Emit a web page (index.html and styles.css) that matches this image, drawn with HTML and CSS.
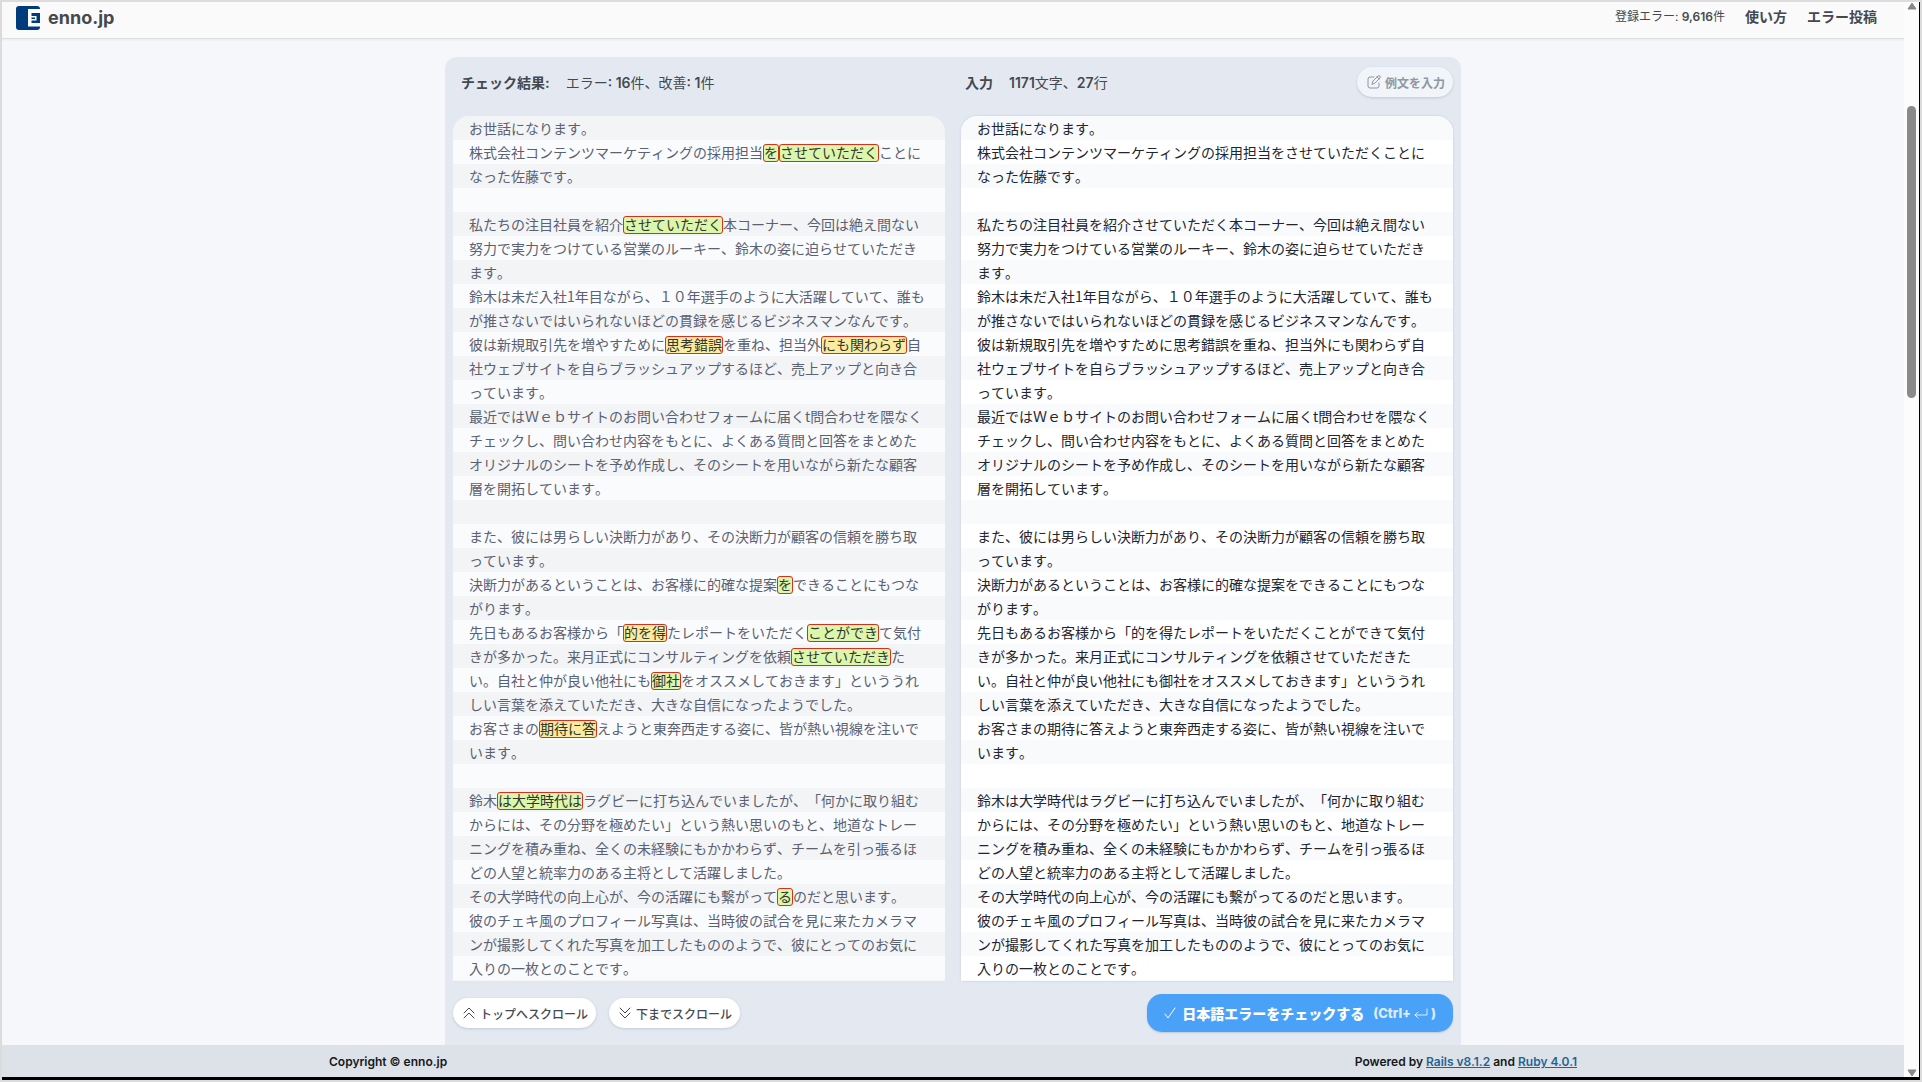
FILE: index.html
```html
<!DOCTYPE html>
<html lang="ja">
<head>
<meta charset="utf-8">
<meta name="viewport" content="width=device-width, initial-scale=1">
<title>enno.jp</title>
<link rel="stylesheet" href="styles.css">
</head>
<body>
<div class="window">
  <div class="page">
    <header class="site-header">
      <a class="brand" href="#">
        <svg width="24" height="24" viewBox="0 0 24 24" aria-hidden="true">
          <rect width="24" height="24" rx="3" fill="#003b7c"/>
          <path d="M12 3H24V7H15.500V10H20.500V14.500H15.500V17H24V20.500H12Z" fill="#fff"/>
          <path d="M15.500 11.500H19V13H15.500Z" fill="#003b7c"/>
        </svg>
        <span>enno.jp</span>
      </a>
      <nav class="site-nav">
        <span class="registered">登録エラー: <b>9,616</b>件</span>
        <a href="#">使い方</a>
        <a href="#">エラー投稿</a>
      </nav>
    </header>

    <main class="checker">
      <section class="panel">
        <div class="panel-head">
          <h2>チェック結果:</h2>
          <p>エラー<b>: 16</b>件、改善<b>: 1</b>件</p>
        </div>
        <div class="result">お世話になります。
株式会社コンテンツマーケティングの採用担当<mark>を</mark><mark>させていただく</mark>ことになった佐藤です。

私たちの注目社員を紹介<mark>させていただく</mark>本コーナー、今回は絶え間ない努力で実力をつけている営業のルーキー、鈴木の姿に迫らせていただきます。
鈴木は未だ入社1年目ながら、１０年選手のように大活躍していて、誰もが推さないではいられないほどの貫録を感じるビジネスマンなんです。
彼は新規取引先を増やすために<mark class="warn">思考錯誤</mark>を重ね、担当外<mark class="warn">にも関わらず</mark>自社ウェブサイトを自らブラッシュアップするほど、売上アップと向き合っています。
最近ではＷｅｂサイトのお問い合わせフォームに届くt問合わせを隈なくチェックし、問い合わせ内容をもとに、よくある質問と回答をまとめたオリジナルのシートを予め作成し、そのシートを用いながら新たな顧客層を開拓しています。

また、彼には男らしい決断力があり、その決断力が顧客の信頼を勝ち取っています。
決断力があるということは、お客様に的確な提案<mark>を</mark>できることにもつながります。
先日もあるお客様から「<mark class="warn">的を得</mark>たレポートをいただく<mark>ことができ</mark>て気付きが多かった。来月正式にコンサルティングを依頼<mark>させていただき</mark>たい。自社と仲が良い他社にも<mark>御社</mark>をオススメしておきます」といううれしい言葉を添えていただき、大きな自信になったようでした。
お客さまの<mark class="warn">期待に答</mark>えようと東奔西走する姿に、皆が熱い視線を注いでいます。

鈴木<mark>は大学時代は</mark>ラグビーに打ち込んでいましたが、「何かに取り組むからには、その分野を極めたい」という熱い思いのもと、地道なトレーニングを積み重ね、全くの未経験にもかかわらず、チームを引っ張るほどの人望と統率力のある主将として活躍しました。
その大学時代の向上心が、今の活躍にも繋がって<mark>る</mark>のだと思います。
彼のチェキ風のプロフィール写真は、当時彼の試合を見に来たカメラマンが撮影してくれた写真を加工したもののようで、彼にとってのお気に入りの一枚とのことです。</div>
        <div class="actions">
          <button class="pill" type="button">
            <svg width="12" height="12" viewBox="0 0 12 12" aria-hidden="true"><path d="M1 6 6 1l5 5M1 11l5-5 5 5"/></svg>
            トップへスクロール
          </button>
          <button class="pill" type="button">
            <svg width="12" height="12" viewBox="0 0 12 12" aria-hidden="true"><path d="m1 1 5 5 5-5M1 6l5 5 5-5"/></svg>
            下までスクロール
          </button>
        </div>
      </section>

      <section class="panel">
        <div class="panel-head">
          <h2><label for="source">入力</label></h2>
          <p><b>1171</b>文字、<b>27</b>行</p>
          <button class="pill sample" type="button">
            <svg width="14" height="14" viewBox="0 0 14 14" aria-hidden="true"><path d="M7 2H3a2 2 0 0 0-2 2v7a2 2 0 0 0 2 2h7a2 2 0 0 0 2-2V8M5 9l1-3 5-5q1-.6 2 0 .6 1 0 2L8 8Zm5-7 2 2"/></svg>
            例文を入力
          </button>
        </div>
        <textarea id="source" class="source" rows="36" spellcheck="false">お世話になります。
株式会社コンテンツマーケティングの採用担当をさせていただくことになった佐藤です。

私たちの注目社員を紹介させていただく本コーナー、今回は絶え間ない努力で実力をつけている営業のルーキー、鈴木の姿に迫らせていただきます。
鈴木は未だ入社1年目ながら、１０年選手のように大活躍していて、誰もが推さないではいられないほどの貫録を感じるビジネスマンなんです。
彼は新規取引先を増やすために思考錯誤を重ね、担当外にも関わらず自社ウェブサイトを自らブラッシュアップするほど、売上アップと向き合っています。
最近ではＷｅｂサイトのお問い合わせフォームに届くt問合わせを隈なくチェックし、問い合わせ内容をもとに、よくある質問と回答をまとめたオリジナルのシートを予め作成し、そのシートを用いながら新たな顧客層を開拓しています。

また、彼には男らしい決断力があり、その決断力が顧客の信頼を勝ち取っています。
決断力があるということは、お客様に的確な提案をできることにもつながります。
先日もあるお客様から「的を得たレポートをいただくことができて気付きが多かった。来月正式にコンサルティングを依頼させていただきたい。自社と仲が良い他社にも御社をオススメしておきます」といううれしい言葉を添えていただき、大きな自信になったようでした。
お客さまの期待に答えようと東奔西走する姿に、皆が熱い視線を注いでいます。

鈴木は大学時代はラグビーに打ち込んでいましたが、「何かに取り組むからには、その分野を極めたい」という熱い思いのもと、地道なトレーニングを積み重ね、全くの未経験にもかかわらず、チームを引っ張るほどの人望と統率力のある主将として活躍しました。
その大学時代の向上心が、今の活躍にも繋がってるのだと思います。
彼のチェキ風のプロフィール写真は、当時彼の試合を見に来たカメラマンが撮影してくれた写真を加工したもののようで、彼にとってのお気に入りの一枚とのことです。</textarea>
        <div class="actions actions-end">
          <button class="check" type="button">
            <svg width="12" height="12" viewBox="0 0 12 12" aria-hidden="true"><path d="m1 7 3 4 7-10"/></svg>
            日本語エラーをチェックする
            <span class="shortcut">(Ctrl+
              <svg width="14" height="12" viewBox="0 0 14 12" aria-hidden="true"><path d="M13 2v6H1m3-3L1 8l3 3"/></svg>)</span>
          </button>
        </div>
      </section>
    </main>

    <footer class="site-footer">
      <div class="footer-inner">
        <span>Copyright © enno.jp</span>
        <span>Powered by <a href="#">Rails v8.1.2</a> and <a href="#">Ruby 4.0.1</a></span>
      </div>
    </footer>
  </div>
  <div class="scrollbar" aria-hidden="true">
    <svg width="10" height="8" viewBox="0 0 10 8"><path d="M5 1 9 7H1Z" fill="#888" stroke="#888" stroke-linejoin="round"/></svg>
    <div class="track"><div class="thumb"></div></div>
    <svg width="10" height="8" viewBox="0 0 10 8"><path d="M5 7 9 1H1Z" fill="#888" stroke="#888" stroke-linejoin="round"/></svg>
  </div>
</div>
</body>
</html>
```
FILE: styles.css
```css
*, *::before, *::after { box-sizing: border-box; }

body {
  margin: 0;
  padding: 2px;
  background: #dcdcdc;
  color: #44494f;
  font-family: Inter, "Noto Sans CJK JP", sans-serif;
  font-size: 14px;
  font-weight: 500;
}

h2, p { margin: 0; font-size: 14px; }
b { font-weight: 600; }
button { font: inherit; color: inherit; cursor: pointer; }
svg { flex: none; }

.window {
  display: flex;
  min-height: calc(100vh - 4px);
  border-right: 1px solid #000;
  border-bottom: 3px solid #000;
  background: #f5f7fb;
}

.page {
  flex: 1;
  min-width: 0;
  display: flex;
  flex-direction: column;
}

.site-header {
  display: flex;
  align-items: flex-start;
  justify-content: space-between;
  height: 37px;
  padding: 4px 27px 0 14px;
  background: #fafafa;
  border-bottom: 1px solid #dcdee0;
  box-shadow: 0 1px 2px rgba(0, 0, 0, .05);
}

.site-header a { color: inherit; text-decoration: none; }

.brand {
  display: flex;
  align-items: center;
  gap: 8px;
  font-size: 18px;
  font-weight: 700;
  line-height: 24px;
}

.site-nav {
  display: flex;
  align-items: center;
  gap: 20px;
  font-weight: 700;
  line-height: 22px;
}

.registered { font-size: 12px; font-weight: 400; }

.checker {
  flex: 1;
  display: grid;
  grid-template-columns: minmax(0, 1fr) minmax(0, 1fr);
  gap: 16px;
  width: 100%;
  max-width: 1016px;
  margin: 18px auto 0;
  padding: 0 8px;
  border-radius: 12px 12px 0 0;
  background: #e4e9f1;
}

.panel-head {
  display: flex;
  align-items: center;
  gap: 16px;
  height: 59px;
  padding: 0 0 9px 8px;
}

.panel:last-child .panel-head { padding-left: 4px; }
.panel-head h2 { font-weight: 700; }
.panel-head p { font-weight: 400; }

.result,
.source {
  display: block;
  width: 100%;
  min-height: 865px;
  padding: 0 16px 1px;
  border: 0;
  border-radius: 16px 16px 0 0;
  font: 400 14px/24px "Noto Sans CJK JP", sans-serif;
  font-kerning: none;
  text-spacing-trim: space-all;
  white-space: pre-wrap;
  overflow-wrap: anywhere;
  line-break: normal;
}

.result {
  background: repeating-linear-gradient(#f3f4f6 0 24px, #fafbfd 24px 48px);
  color: #5b6170;
}

.source {
  margin: 0;
  resize: none;
  overflow: hidden;
  outline: 0;
  background: repeating-linear-gradient(#f9fafc 0 24px, #fff 24px 48px);
  box-shadow: 0 0 3px rgba(90, 110, 150, .2);
  color: #22252e;
}

mark {
  border: 1px solid #d8301c;
  border-radius: 3px;
  background: #dcf6ac;
  color: #30372c;
  font-family: "Liberation Sans", "Noto Sans CJK JP", sans-serif;
  line-height: 1;
}

mark.warn { background: #fdec9f; }

.actions {
  display: flex;
  align-items: center;
  gap: 13px;
  height: 64px;
}

.actions-end { justify-content: flex-end; }

.pill {
  display: flex;
  align-items: center;
  gap: 5px;
  height: 30px;
  padding: 0 8px 0 10px;
  border: 0;
  border-radius: 15px;
  background: #fff;
  box-shadow: 0 1px 3px rgba(40, 60, 100, .18);
  font-size: 12px;
}

.pill svg,
.check svg {
  fill: none;
  stroke: currentColor;
  stroke-linecap: round;
  stroke-linejoin: round;
}

.sample {
  gap: 4px;
  margin-left: auto;
  background: #f1f4f8;
  color: #9096a3;
  font-weight: 700;
}

.check {
  display: flex;
  align-items: center;
  gap: 6px;
  height: 38px;
  padding: 0 17px;
  border: 0;
  border-radius: 15px;
  background: #4aa2f8;
  box-shadow: 0 1px 2px rgba(40, 60, 100, .2);
  color: #fff;
  font-weight: 800;
}

.shortcut {
  display: flex;
  align-items: center;
  gap: 3px;
  margin-left: 3px;
  color: #dcecff;
  font-size: 13px;
}

.site-footer {
  padding: 2px 24px 0;
  background: #dde1e8;
  color: #15181c;
  font-size: 12px;
  font-weight: 600;
  line-height: 30px;
}

.footer-inner {
  display: flex;
  justify-content: space-between;
  max-width: 1248px;
  margin: 0 auto;
}

.footer-inner a { color: #1f6593; }

.scrollbar {
  display: flex;
  flex-direction: column;
  align-items: center;
  width: 15px;
  background: #fcfcfc;
}

.track {
  flex: 1;
  width: 9px;
  padding-top: 96px;
}

.thumb {
  height: 292px;
  border-radius: 5px;
  background: #8a8a8a;
}
```
